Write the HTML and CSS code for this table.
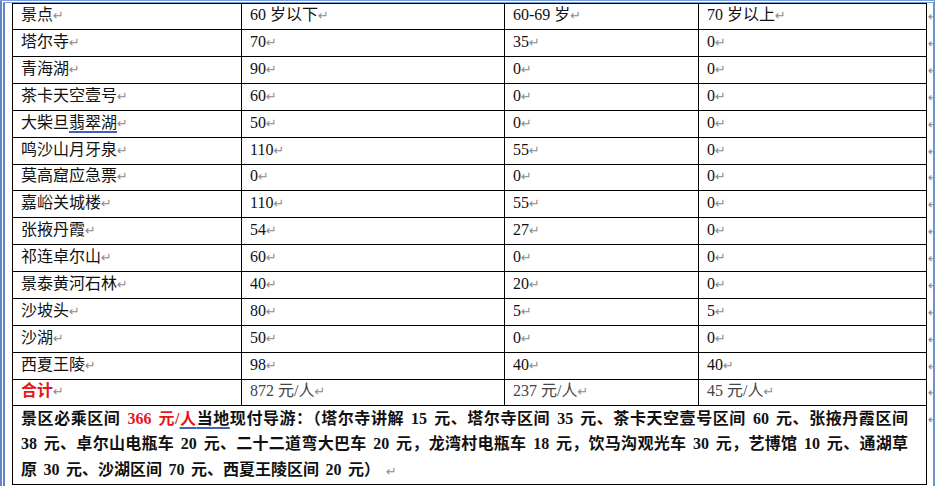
FILE: index.html
```html
<!DOCTYPE html>
<html lang="zh-CN">
<head>
<meta charset="utf-8">
<title>景点门票</title>
<link rel="stylesheet" href="styles.css">
</head>
<body>
<div class="frame">
  <div class="sheet">
    <div class="row head">
      <div class="cell pm">景点</div><div class="cell pm">60 岁以下</div><div class="cell pm">60-69 岁</div><div class="cell pm">70 岁以上</div><div class="mark"></div>
    </div>
    <div class="row">
      <div class="cell pm">塔尔寺</div><div class="cell pm">70</div><div class="cell pm">35</div><div class="cell pm">0</div><div class="mark"></div>
    </div>
    <div class="row">
      <div class="cell pm">青海湖</div><div class="cell pm">90</div><div class="cell pm">0</div><div class="cell pm">0</div><div class="mark"></div>
    </div>
    <div class="row">
      <div class="cell pm">茶卡天空壹号</div><div class="cell pm">60</div><div class="cell pm">0</div><div class="cell pm">0</div><div class="mark"></div>
    </div>
    <div class="row">
      <div class="cell pm">大柴旦<span class="ul">翡翠湖</span></div><div class="cell pm">50</div><div class="cell pm">0</div><div class="cell pm">0</div><div class="mark"></div>
    </div>
    <div class="row">
      <div class="cell pm">鸣沙山月牙泉</div><div class="cell pm">110</div><div class="cell pm">55</div><div class="cell pm">0</div><div class="mark"></div>
    </div>
    <div class="row">
      <div class="cell pm">莫高窟应急票</div><div class="cell pm">0</div><div class="cell pm">0</div><div class="cell pm">0</div><div class="mark"></div>
    </div>
    <div class="row">
      <div class="cell pm">嘉峪关城楼</div><div class="cell pm">110</div><div class="cell pm">55</div><div class="cell pm">0</div><div class="mark"></div>
    </div>
    <div class="row">
      <div class="cell pm">张掖丹霞</div><div class="cell pm">54</div><div class="cell pm">27</div><div class="cell pm">0</div><div class="mark"></div>
    </div>
    <div class="row">
      <div class="cell pm">祁连卓尔山</div><div class="cell pm">60</div><div class="cell pm">0</div><div class="cell pm">0</div><div class="mark"></div>
    </div>
    <div class="row">
      <div class="cell pm">景泰黄河石林</div><div class="cell pm">40</div><div class="cell pm">20</div><div class="cell pm">0</div><div class="mark"></div>
    </div>
    <div class="row">
      <div class="cell pm">沙坡头</div><div class="cell pm">80</div><div class="cell pm">5</div><div class="cell pm">5</div><div class="mark"></div>
    </div>
    <div class="row">
      <div class="cell pm">沙湖</div><div class="cell pm">50</div><div class="cell pm">0</div><div class="cell pm">0</div><div class="mark"></div>
    </div>
    <div class="row">
      <div class="cell pm">西夏王陵</div><div class="cell pm">98</div><div class="cell pm">40</div><div class="cell pm">40</div><div class="mark"></div>
    </div>
    <div class="row total">
      <div class="cell pm label">合计</div><div class="cell pm sum">872 元/人</div><div class="cell pm sum">237 元/人</div><div class="cell pm sum">45 元/人</div><div class="mark"></div>
    </div>
    <div class="row">
      <div class="cell note">
        <span class="line">景区必乘区间 <span class="red">366 元/<span class="ul">人</span></span><span class="ul">当地</span>现付导游：（塔尔寺讲解 15 元、塔尔寺区间 35 元、茶卡天空壹号区间 60 元、张掖丹霞区间</span>
        <span class="line">38 元、卓尔山电瓶车 20 元、二十二道弯大巴车 20 元，龙湾村电瓶车 18 元，饮马沟观光车 30 元，艺博馆 10 元、通湖草</span>
        <span class="line last pm">原 30 元、沙湖区间 70 元、西夏王陵区间 20 元）</span>
      </div>
      <div class="mark top"></div>
    </div>
  </div>
</div>
</body>
</html>
```

FILE: styles.css
```css
html, body {
  margin: 0;
  padding: 0;
  background: #ffffff;
}

.frame {
  box-sizing: border-box;
  width: 935px;
  height: 486px;
  border-left: 5px double #5f86c6;
  border-top: 3px double #7c9fd6;
  border-right: 2px solid #6f93cc;
  padding-left: 7px;
  overflow: hidden;
}

.sheet {
  display: grid;
  grid-template-columns: 229px 263px 194px 228px 6px;
  grid-template-rows: repeat(14, 26.93px) 26px 79px;
  border-left: 1px solid #000;
  font-family: "Liberation Serif", "Noto Sans CJK SC", serif;
  font-size: 16px;
  line-height: 20px;
  color: #111111;
}

.row {
  display: contents;
}

.cell {
  box-sizing: border-box;
  border-right: 1px solid #000;
  border-bottom: 1px solid #000;
  padding: 0 0 2px 8px;
  display: flex;
  align-items: center;
  white-space: nowrap;
}

.head .cell {
  border-top: 1px solid #000;
}

.pm::after {
  content: "\21B5";
  font-family: "DejaVu Sans", sans-serif;
  font-weight: normal;
  font-size: 13px;
  line-height: 10px;
  color: #8c8c8c;
  margin-left: 0;
  position: relative;
  top: 1px;
}

.mark {
  overflow: hidden;
  display: flex;
  align-items: center;
  padding-bottom: 1px;
}

.mark::after {
  content: "\21B5";
  font-family: "DejaVu Sans", sans-serif;
  font-size: 13px;
  line-height: 10px;
  color: #8c8c8c;
  margin-left: 1px;
  position: relative;
  top: 1px;
}

.mark.top {
  align-items: flex-start;
  padding-top: 8px;
}

.ul {
  text-decoration: underline;
  text-decoration-color: #3d62b6;
  text-decoration-thickness: 1.5px;
  text-underline-offset: 3px;
}

.total .label {
  color: #e8141b;
  font-weight: bold;
}

.total .sum {
  color: #444444;
}

.note {
  grid-column: span 4;
  display: block;
  padding: 0 18px 0 8px;
  font-weight: bold;
  line-height: 25.5px;
  word-spacing: 2.5px;
  white-space: normal;
  color: #111111;
}

.line {
  display: block;
  white-space: nowrap;
  text-align: justify;
  text-align-last: justify;
}

.line.last {
  text-align: left;
  text-align-last: left;
}

.line.last::after {
  margin-left: 6px;
}

.red {
  color: #e8141b;
}
```
